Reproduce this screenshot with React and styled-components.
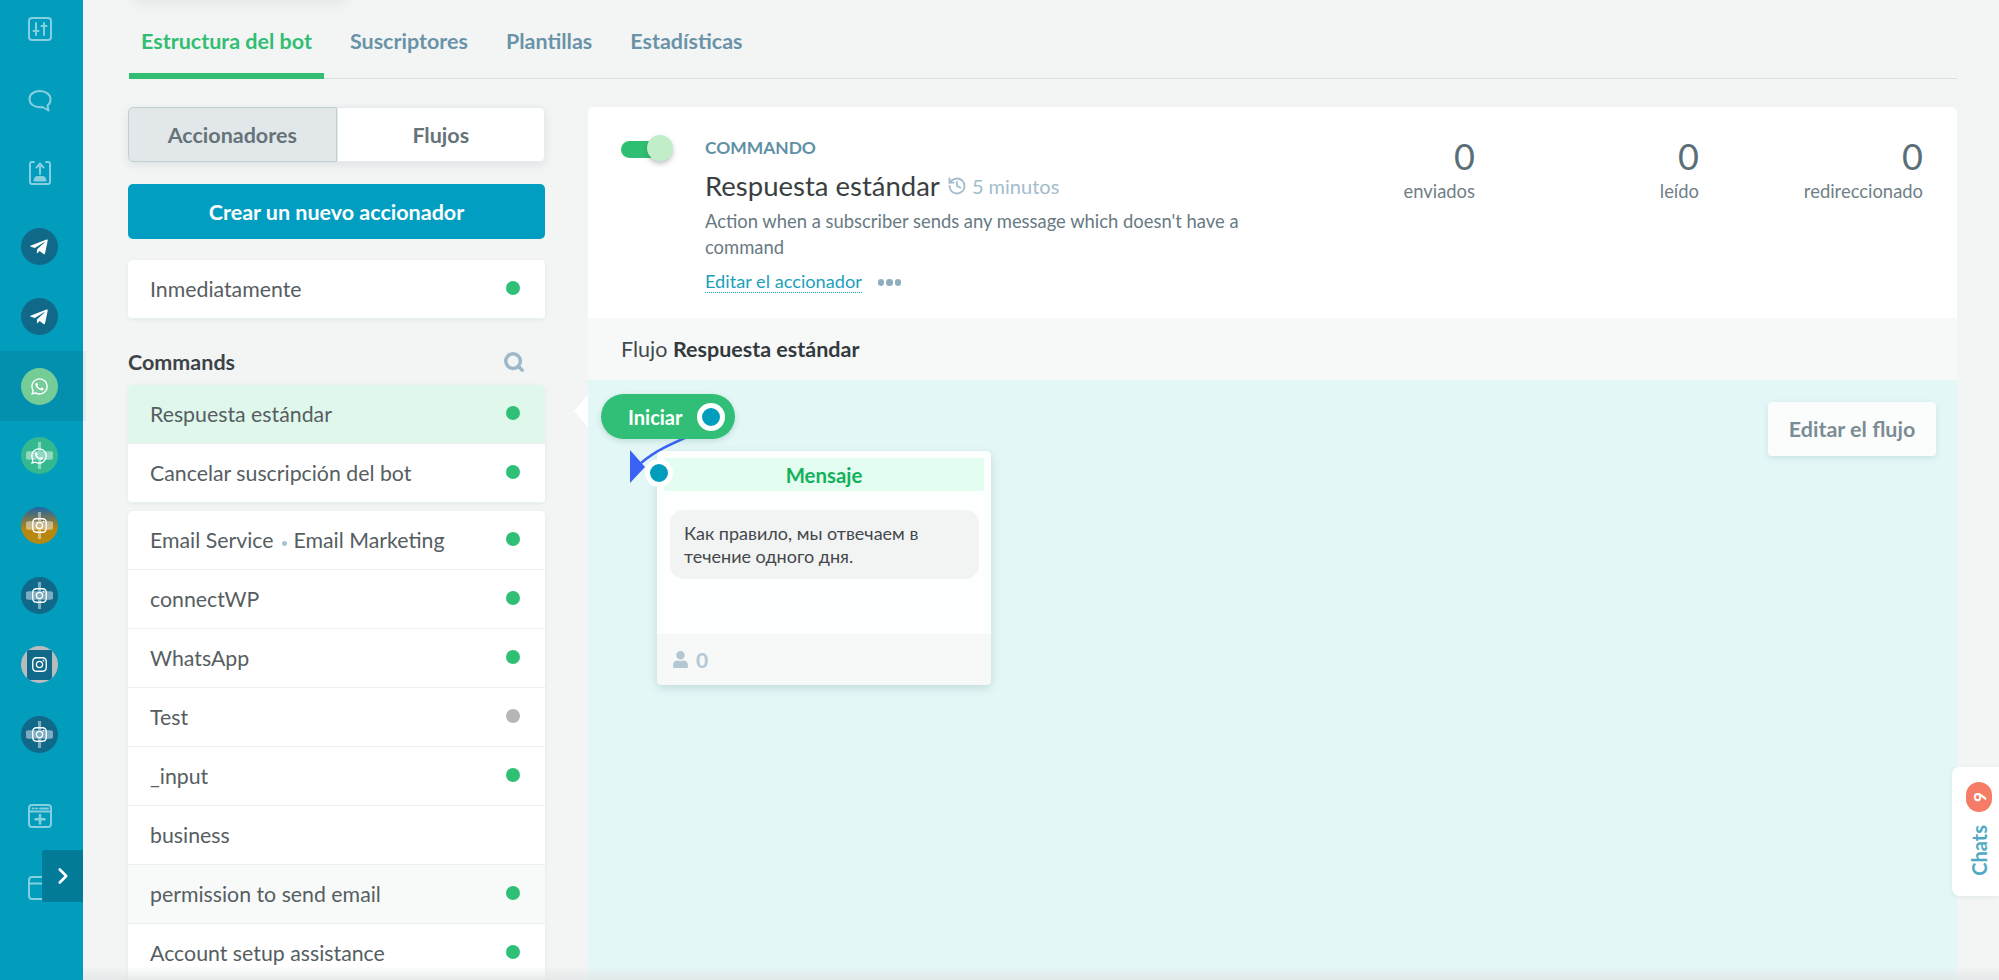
import React from 'react';
import styled, { createGlobalStyle } from 'styled-components';
import { Search, ChevronRight, History } from 'lucide-react';
import { FaTelegramPlane, FaWhatsapp, FaInstagram, FaUser } from 'react-icons/fa';

const GlobalStyle = createGlobalStyle`
  html, body {
    margin: 0;
    padding: 0;
    background: #f3f5f5;
    font-family: 'Lato', 'Noto Sans', sans-serif;
  }
  * { box-sizing: border-box; }
`;

const triggers = [
  { name: 'Email Service', extra: 'Email Marketing', status: 'on' },
  { name: 'connectWP', status: 'on' },
  { name: 'WhatsApp', status: 'on' },
  { name: 'Test', status: 'off' },
  { name: '_input', status: 'on' },
  { name: 'business' },
  { name: 'permission to send email', status: 'on', hover: true },
  { name: 'Account setup assistance', status: 'on' },
];

const stats = [
  { value: 0, label: 'enviados' },
  { value: 0, label: 'leído' },
  { value: 0, label: 'redireccionado' },
];

function LineIcon({ children }) {
  return (
    <svg width="26" height="26" viewBox="0 0 26 26" fill="none" stroke="#86cfdf" strokeWidth="2" strokeLinecap="round" strokeLinejoin="round">
      {children}
    </svg>
  );
}

function CrossMark() {
  return (
    <svg width="27" height="27" viewBox="0 0 26 26">
      <path d="M11.500 0h3v9h9a2.500 2.500 0 0 1 0 8h-9v9h-3v-9h-9a2.500 2.500 0 0 1 0-8h9z" fill="#ffffff" opacity="0.45" />
    </svg>
  );
}

export default function App() {
  return (
    <Page>
      <GlobalStyle />
      <TopGlow />
      <Sidebar>
        <NavTop>
          <NavRow>
            <LineIcon>
              <rect x="2" y="2" width="22" height="22" rx="3" />
              <path d="M9 7v12M17 7v12" />
              <path d="M6.500 15h5M14.500 10h5" />
            </LineIcon>
          </NavRow>
          <NavRow>
            <LineIcon>
              <path d="M13 3c6 0 10.500 3.500 10.500 8.500 0 2.500-1 4.500-3 6l1 5-6-3.500c-.8.100-1.600.200-2.500.200C7 19.200 2.500 16 2.500 11S7 3 13 3z" />
            </LineIcon>
          </NavRow>
          <NavRow>
            <LineIcon>
              <path d="M7 2H5a2 2 0 0 0-2 2v18a2 2 0 0 0 2 2h16a2 2 0 0 0 2-2V4a2 2 0 0 0-2-2h-2" />
              <path d="M13 14V4M9.500 7.500 13 3.500l3.500 4" />
              <path d="M7.500 20.500c.5-2.500 1.500-3.500 3-3.500h5c1.500 0 2.500 1 3 3.500z" fill="#86cfdf" />
            </LineIcon>
          </NavRow>
        </NavTop>
        <NavChannels>
          <NavRow><Channel><FaTelegramPlane size={20} /></Channel></NavRow>
          <NavRow><Channel><FaTelegramPlane size={20} /></Channel></NavRow>
          <NavRow $active><Channel $bg="#74cc97"><FaWhatsapp size={19} /></Channel></NavRow>
          <NavRow><Channel $bg="#33b88f"><CrossSlot><CrossMark /></CrossSlot><FaWhatsapp size={18} /></Channel></NavRow>
          <NavRow><Channel $bg="linear-gradient(#1f63a8 0%, #b8860f 60%, #b58a10 100%)"><CrossSlot><CrossMark /></CrossSlot><FaInstagram size={17} /></Channel></NavRow>
          <NavRow><Channel><CrossSlot><CrossMark /></CrossSlot><FaInstagram size={17} /></Channel></NavRow>
          <NavRow><Channel $bg="#b9bcbc"><SquareInset><FaInstagram size={17} /></SquareInset></Channel></NavRow>
          <NavRow><Channel><CrossSlot><CrossMark /></CrossSlot><FaInstagram size={17} /></Channel></NavRow>
        </NavChannels>
        <NavBottom>
          <NavRow>
            <LineIcon>
              <rect x="2" y="2" width="22" height="22" rx="3" />
              <path d="M2 8.500h22M5.500 5.500h1M9 5.500h1M13 5.500h8" />
              <path d="M13 12v8.500M8.500 16.200h9" strokeWidth="2.600" />
            </LineIcon>
          </NavRow>
          <NavRow>
            <LineIcon>
              <rect x="2" y="2" width="22" height="22" rx="3" />
              <path d="M2 8.500h22" />
            </LineIcon>
          </NavRow>
        </NavBottom>
        <Expand><ChevronRight size={26} strokeWidth={2.4} /></Expand>
      </Sidebar>

      <Content>
        <Tabs>
          <Tab $active>Estructura del bot</Tab>
          <Tab>Suscriptores</Tab>
          <Tab>Plantillas</Tab>
          <Tab>Estadísticas</Tab>
        </Tabs>

        <Columns>
          <Left>
            <Segments>
              <Segment $active>Accionadores</Segment>
              <Segment>Flujos</Segment>
            </Segments>
            <CreateButton>Crear un nuevo accionador</CreateButton>
            <ListCard>
              <ListRow>
                <span>Inmediatamente</span>
                <Dot $status="on" />
              </ListRow>
            </ListCard>
            <SectionHead>
              <span>Commands</span>
              <Search size={22} strokeWidth={3.8} color="#9db9c7" />
            </SectionHead>
            <ListCard>
              <ListRow $selected>
                <span>Respuesta estándar</span>
                <Dot $status="on" />
              </ListRow>
              <ListRow>
                <span>Cancelar suscripción del bot</span>
                <Dot $status="on" />
              </ListRow>
            </ListCard>
            <TriggerList>
              {triggers.map((t) => (
                <ListRow key={t.name} $hover={t.hover}>
                  <span>
                    {t.name}
                    {t.extra && (
                      <>
                        <Sep />
                        {t.extra}
                      </>
                    )}
                  </span>
                  {t.status && <Dot $status={t.status} />}
                </ListRow>
              ))}
            </TriggerList>
          </Left>

          <Main>
            <Notch />
            <Summary>
              <ToggleCol>
                <Toggle><Knob /></Toggle>
              </ToggleCol>
              <Info>
                <Kicker>COMMANDO</Kicker>
                <TitleRow>
                  <Title>Respuesta estándar</Title>
                  <Delay><History size={20} strokeWidth={2.2} />5 minutos</Delay>
                </TitleRow>
                <Description>Action when a subscriber sends any message which doesn't have a command</Description>
                <LinkRow>
                  <EditLink>Editar el accionador</EditLink>
                  <MoreDots><i /><i /><i /></MoreDots>
                </LinkRow>
              </Info>
              <Stats>
                {stats.map((s) => (
                  <Stat key={s.label}>
                    <StatValue>{s.value}</StatValue>
                    <StatLabel>{s.label}</StatLabel>
                  </Stat>
                ))}
              </Stats>
            </Summary>
            <FlowHead>Flujo&nbsp;<b>Respuesta estándar</b></FlowHead>
            <Canvas>
              <Wire width="70" height="50" viewBox="0 0 70 50">
                <path d="M58 1C42 8 26 15 12 27" fill="none" stroke="#3a62f5" strokeWidth="2.500" />
                <path d="M1 14 16 31 1 47z" fill="#3a62f5" />
              </Wire>
              <StartNode>
                Iniciar
                <Port $inner="#029cbd" />
              </StartNode>
              <MessageNode>
                <InPort><Port $inner="#029cbd" /></InPort>
                <MessageHead>Mensaje</MessageHead>
                <Bubble>Как правило, мы отвечаем в течение одного дня.</Bubble>
                <MessageFoot>
                  <FaUser size={17} />
                  <b>0</b>
                </MessageFoot>
              </MessageNode>
              <EditFlow>Editar el flujo</EditFlow>
            </Canvas>
          </Main>
        </Columns>
      </Content>

      <ChatsTab>
        <ChatsLabel>Chats</ChatsLabel>
        <ChatsBadge>9</ChatsBadge>
      </ChatsTab>
      <BottomFade />
    </Page>
  );
}

const Page = styled.div`
  position: relative;
  display: flex;
  width: 1999px;
  height: 980px;
  overflow: hidden;
  background: #f3f5f5;
`;

const TopGlow = styled.div`
  position: absolute;
  top: -14px;
  left: 135px;
  width: 210px;
  height: 14px;
  box-shadow: 0 2px 14px rgba(70, 90, 85, 0.12);
`;

const Sidebar = styled.nav`
  position: relative;
  z-index: 1;
  flex: 0 0 83px;
  min-width: 0;
  height: 980px;
  background: #029cbd;
  display: flex;
  flex-direction: column;
`;

const NavTop = styled.div`
  margin-top: -7px;
  display: grid;
  grid-auto-rows: 72px;
`;

const NavChannels = styled.div`
  margin-top: 3px;
  display: grid;
  grid-auto-rows: 69.7px;
`;

const NavBottom = styled.div`
  margin-top: 10px;
  display: grid;
  grid-auto-rows: 72px;
`;

const NavRow = styled.div`
  display: flex;
  align-items: center;
  justify-content: center;
  padding-right: 3px;
  width: 83px;
  background: ${(p) => (p.$active ? '#0390ae' : 'transparent')};
  box-shadow: ${(p) => (p.$active ? '3px 0 0 rgba(0, 50, 60, 0.05)' : 'none')};
`;

const Channel = styled.div`
  position: relative;
  width: 37px;
  height: 37px;
  margin-left: -2px;
  border-radius: 50%;
  background: ${(p) => p.$bg || '#11698a'};
  color: #fff;
  display: flex;
  align-items: center;
  justify-content: center;
  overflow: hidden;

  svg { position: relative; }
`;

const CrossSlot = styled.span`
  position: absolute;
  inset: 5px;
  display: flex;
`;

const SquareInset = styled.span`
  width: 25px;
  height: 30px;
  background: #11698a;
  display: flex;
  align-items: center;
  justify-content: center;
`;

const Expand = styled.button`
  position: absolute;
  top: 850px;
  left: 42px;
  width: 41px;
  height: 52px;
  padding: 0;
  border: 0;
  border-radius: 3px 0 0 3px;
  background: #027b98;
  color: #fff;
  display: flex;
  align-items: center;
  justify-content: center;
`;

const Content = styled.main`
  flex: 1;
  min-width: 0;
  padding: 0 42px 0 45px;
`;

const Tabs = styled.div`
  height: 79px;
  margin-left: 1px;
  display: flex;
  gap: 14px;
  border-bottom: 1px solid #d5e0e3;
`;

const Tab = styled.div`
  height: 79px;
  padding: 29px 12px 0;
  font-size: 21.500px;
  line-height: 25px;
  font-weight: 700;
  color: ${(p) => (p.$active ? '#31be73' : '#6a93a8')};
  border-bottom: ${(p) => (p.$active ? '6px solid #31be73' : '0')};
`;

const Columns = styled.div`
  display: flex;
  gap: 43px;
  margin-top: 28px;
  height: 873px;
`;

const Left = styled.section`
  flex: 0 0 417px;
`;

const Segments = styled.div`
  display: flex;
  height: 55px;
  border-radius: 5px;
  box-shadow: 0 3px 10px rgba(90, 120, 130, 0.14);
`;

const Segment = styled.div`
  flex: 1;
  display: flex;
  align-items: center;
  justify-content: center;
  font-size: 21.500px;
  font-weight: 700;
  color: #667379;
  background: ${(p) => (p.$active ? '#e2e8e9' : '#fff')};
  border: 1px solid ${(p) => (p.$active ? '#bfced2' : '#e6ecee')};
  border-radius: ${(p) => (p.$active ? '5px 0 0 5px' : '0 5px 5px 0')};
`;

const CreateButton = styled.button`
  display: block;
  width: 100%;
  height: 55px;
  margin-top: 22px;
  border: 0;
  border-radius: 5px;
  background: #029ec2;
  color: #fff;
  font-family: inherit;
  font-size: 21.500px;
  font-weight: 700;
`;

const ListCard = styled.div`
  margin-top: 21px;
  background: #fff;
  border-radius: 5px;
  overflow: hidden;
  box-shadow: 0 1px 4px rgba(90, 120, 130, 0.1);
`;

const TriggerList = styled(ListCard)`
  margin-top: 8px;
`;

const ListRow = styled.div`
  height: 59px;
  padding: 0 25px 1px 22px;
  display: flex;
  align-items: center;
  justify-content: space-between;
  font-size: 21.300px;
  color: #565e62;
  background: ${(p) => (p.$selected ? '#e0f7ec' : p.$hover ? '#f8f9f9' : '#fff')};
  border-bottom: 1px solid #e9f0f1;
`;

const Dot = styled.i`
  flex: none;
  width: 14px;
  height: 14px;
  margin-top: -2px;
  border-radius: 50%;
  background: ${(p) => (p.$status === 'on' ? '#2fc076' : '#b4b6b8')};
`;

const Sep = styled.i`
  display: inline-block;
  width: 5px;
  height: 5px;
  margin: 0 7px 0 8px;
  border-radius: 50%;
  background: #a6c4d6;
  vertical-align: 2px;
`;

const SectionHead = styled.div`
  height: 24px;
  margin: 31px 0 -10px;
  padding-right: 20px;
  display: flex;
  align-items: center;
  justify-content: space-between;
  font-size: 21.500px;
  font-weight: 700;
  color: #3d4447;
`;

const Main = styled.section`
  position: relative;
  flex: 1;
  min-width: 0;
  display: flex;
  flex-direction: column;
`;

const Notch = styled.div`
  position: absolute;
  top: 288px;
  left: -14px;
  width: 0;
  height: 0;
  border-style: solid;
  border-width: 16px 14px 16px 0;
  border-color: transparent #fff transparent transparent;
`;

const Summary = styled.div`
  flex: 0 0 211px;
  display: flex;
  background: #fff;
  border-radius: 6px 6px 0 0;
`;

const ToggleCol = styled.div`
  flex: 0 0 117px;
  padding: 34px 0 0 33px;
`;

const Toggle = styled.div`
  position: relative;
  width: 40px;
  height: 17px;
  border-radius: 9px;
  background: #2fbf73;
`;

const Knob = styled.span`
  position: absolute;
  top: -6px;
  left: 26px;
  width: 26px;
  height: 26px;
  border-radius: 50%;
  background: #c1eec9;
  box-shadow: 0 3px 5px rgba(50, 70, 70, 0.3);
`;

const Info = styled.div`
  flex: 0 0 545px;
  padding-top: 30px;
`;

const Kicker = styled.div`
  font-size: 17.400px;
  line-height: 22px;
  font-weight: 700;
  color: #5f90a5;
`;

const TitleRow = styled.div`
  display: flex;
  align-items: baseline;
  gap: 7px;
  margin-top: 11px;
`;

const Title = styled.div`
  font-size: 27.500px;
  line-height: 32px;
  color: #3a3f42;
`;

const Delay = styled.div`
  display: flex;
  align-items: center;
  gap: 5px;
  font-size: 20px;
  color: #a3bccb;
`;

const Description = styled.p`
  margin: 7px 0 0;
  font-size: 18.400px;
  line-height: 25.500px;
  color: #687a83;
`;

const LinkRow = styled.div`
  display: flex;
  align-items: center;
  gap: 16px;
  margin-top: 10px;
`;

const EditLink = styled.a`
  font-size: 18.200px;
  line-height: 22px;
  color: #1c9fbb;
  border-bottom: 1px dotted #1c9fbb;
`;

const MoreDots = styled.span`
  display: flex;
  gap: 2px;
  margin-top: 2px;

  i {
    width: 6.500px;
    height: 6.500px;
    border-radius: 50%;
    background: #8fadbf;
  }
`;

const Stats = styled.div`
  flex: 0 0 707px;
  padding: 26px 34px 0 0;
  display: grid;
  grid-template-columns: repeat(3, 224px);
  justify-content: end;
`;

const Stat = styled.div`
  text-align: right;
`;

const StatValue = styled.div`
  font-size: 36px;
  line-height: 46px;
  color: #5c6e77;
`;

const StatLabel = styled.div`
  margin-top: 1px;
  font-size: 18.400px;
  line-height: 22px;
  color: #6f7f87;
`;

const FlowHead = styled.div`
  flex: 0 0 62px;
  display: flex;
  align-items: center;
  padding-left: 33px;
  font-size: 21.500px;
  color: #43494c;
  background: #f7f9f9;

  b { color: #33393c; }
`;

const Canvas = styled.div`
  position: relative;
  flex: 1;
  background: #e4f7f7;
`;

const StartNode = styled.div`
  position: absolute;
  top: 14px;
  left: 13px;
  width: 134px;
  height: 45px;
  padding: 0 10px 0 27px;
  display: flex;
  align-items: center;
  justify-content: space-between;
  border-radius: 23px;
  background: #31bf78;
  color: #fff;
  font-size: 20px;
  font-weight: 700;
  box-shadow: 0 2px 6px rgba(40, 120, 90, 0.2);
`;

const Port = styled.span`
  display: block;
  width: 28px;
  height: 28px;
  border-radius: 50%;
  border: 5px solid #fff;
  background: ${(p) => p.$inner};
`;

const InPort = styled.div`
  position: absolute;
  top: 8px;
  left: -12px;
`;

const Wire = styled.svg`
  position: absolute;
  top: 56px;
  left: 41px;
`;

const MessageNode = styled.div`
  position: absolute;
  top: 71px;
  left: 69px;
  width: 334px;
  height: 234px;
  padding-top: 7px;
  background: #fdfefe;
  border-radius: 5px;
  box-shadow: 0 3px 10px rgba(60, 100, 110, 0.2);
  display: flex;
  flex-direction: column;
`;

const MessageHead = styled.div`
  height: 33px;
  margin: 0 7px;
  display: flex;
  align-items: center;
  justify-content: center;
  border-radius: 2px;
  background: #e3fdf0;
  color: #13b15c;
  font-size: 20.400px;
  font-weight: 700;
`;

const Bubble = styled.div`
  margin: 19px 12px 0 13px;
  height: 69px;
  padding: 12px 14px;
  border-radius: 14px;
  background: #f2f3f3;
  color: #43484b;
  font-size: 18px;
  line-height: 23px;
`;

const MessageFoot = styled.div`
  margin-top: auto;
  height: 51px;
  padding-left: 15px;
  display: flex;
  align-items: center;
  gap: 7px;
  background: #f7f9f9;
  border-radius: 0 0 5px 5px;
  color: #b4c7d3;
  font-size: 21px;
`;

const EditFlow = styled.div`
  position: absolute;
  top: 22px;
  right: 21px;
  width: 168px;
  height: 54px;
  display: flex;
  align-items: center;
  justify-content: center;
  background: #fbfdfd;
  border-radius: 4px;
  color: #7b8c94;
  font-size: 21.500px;
  font-weight: 700;
  box-shadow: 0 2px 6px rgba(60, 130, 150, 0.16);
`;

const ChatsTab = styled.div`
  position: absolute;
  top: 767px;
  right: 0;
  width: 47px;
  height: 129px;
  border-radius: 8px 0 0 8px;
  background: #fff;
  display: flex;
  flex-direction: column-reverse;
  align-items: center;
  justify-content: flex-end;
  padding: 15px 0 15px 6px;
  gap: 13px;
  box-shadow: 0 1px 5px rgba(60, 120, 130, 0.1);
`;

const ChatsLabel = styled.span`
  writing-mode: vertical-rl;
  transform: rotate(180deg);
  font-size: 20px;
  line-height: 24px;
  font-weight: 700;
  color: #4fa9c4;
`;

const ChatsBadge = styled.span`
  width: 26px;
  height: 30px;
  border-radius: 13px;
  background: #f57c66;
  color: #fff;
  font-size: 17px;
  font-weight: 700;
  display: flex;
  align-items: center;
  justify-content: center;
  writing-mode: vertical-rl;
  transform: rotate(180deg);
`;

const BottomFade = styled.div`
  position: absolute;
  left: 0;
  right: 0;
  bottom: 0;
  height: 14px;
  pointer-events: none;
  background: linear-gradient(rgba(225, 228, 228, 0), rgba(225, 228, 228, 0.75));
`;
